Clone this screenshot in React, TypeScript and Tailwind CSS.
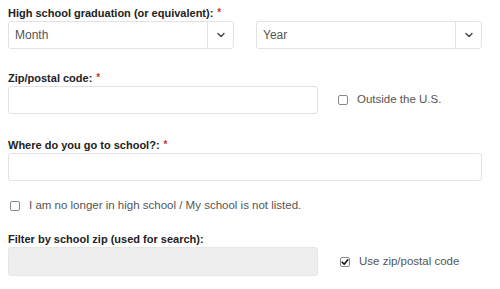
import React from "react";

const font = { fontFamily: '"Liberation Sans", Arial, sans-serif' };

function Label({ text, required = true }: { text: string; required?: boolean }) {
  return (
    <div className="h-[16px] leading-[16px] text-[11px] font-bold text-[#222]">
      {text}
      {required && <span className="ml-[4px] text-[#d0342c] text-[10px] align-top">*</span>}
    </div>
  );
}

function Chevron() {
  return (
    <svg width="8" height="6" viewBox="0 0 8 6" fill="none">
      <path d="M1 1.5 L4 4.5 L7 1.5" stroke="#444" strokeWidth="1.4" strokeLinecap="round" strokeLinejoin="round" />
    </svg>
  );
}

function Select({ value }: { value: string }) {
  return (
    <div className="flex h-[28px] w-[226px] rounded-[3px] border border-[#e2e2e2] bg-white">
      <div className="flex flex-1 items-center pl-[6px] text-[12px] text-[#555]">{value}</div>
      <div className="flex w-[26px] items-center justify-center border-l border-[#e2e2e2]">
        <Chevron />
      </div>
    </div>
  );
}

function Checkbox({ checked = false, label }: { checked?: boolean; label: string }) {
  return (
    <div className="flex items-center gap-[9px] text-[11.5px] text-[#555]">
      <div className="flex h-[10px] w-[10px] items-center justify-center rounded-[2px] border border-[#8a8a8a] bg-white">
        {checked && (
          <svg width="8" height="8" viewBox="0 0 8 8" fill="none">
            <path d="M1.2 4.2 L3.2 6.2 L6.8 1.8" stroke="#111" strokeWidth="1.6" strokeLinecap="round" strokeLinejoin="round" />
          </svg>
        )}
      </div>
      <span>{label}</span>
    </div>
  );
}

export default function App() {
  return (
    <div className="h-[289px] w-[500px] bg-white pl-[8px] pt-[5px]" style={font}>
      <div className="w-[474px]">
        <Label text="High school graduation (or equivalent):" />
        <div className="flex justify-between">
          <Select value="Month" />
          <Select value="Year" />
        </div>

        <div className="mt-[21px]">
          <Label text="Zip/postal code:" />
          <div className="flex items-center">
            <div className="h-[28px] w-[310px] rounded-[3px] border border-[#e2e2e2] bg-white" />
            <div className="ml-[20px]">
              <Checkbox label="Outside the U.S." />
            </div>
          </div>
        </div>

        <div className="mt-[23px]">
          <Label text="Where do you go to school?:" />
          <div className="h-[28px] w-[474px] rounded-[3px] border border-[#e2e2e2] bg-white" />
        </div>

        <div className="mt-[17px] flex h-[16px] items-center pl-[2px]">
          <Checkbox label="I am no longer in high school / My school is not listed." />
        </div>

        <div className="mt-[17px]">
          <Label text="Filter by school zip (used for search):" required={false} />
          <div className="flex items-center">
            <div className="h-[29px] w-[310px] rounded-[3px] border border-[#e6e6e6] bg-[#eeeeee]" />
            <div className="ml-[22px]">
              <Checkbox checked label="Use zip/postal code" />
            </div>
          </div>
        </div>
      </div>
    </div>
  );
}
